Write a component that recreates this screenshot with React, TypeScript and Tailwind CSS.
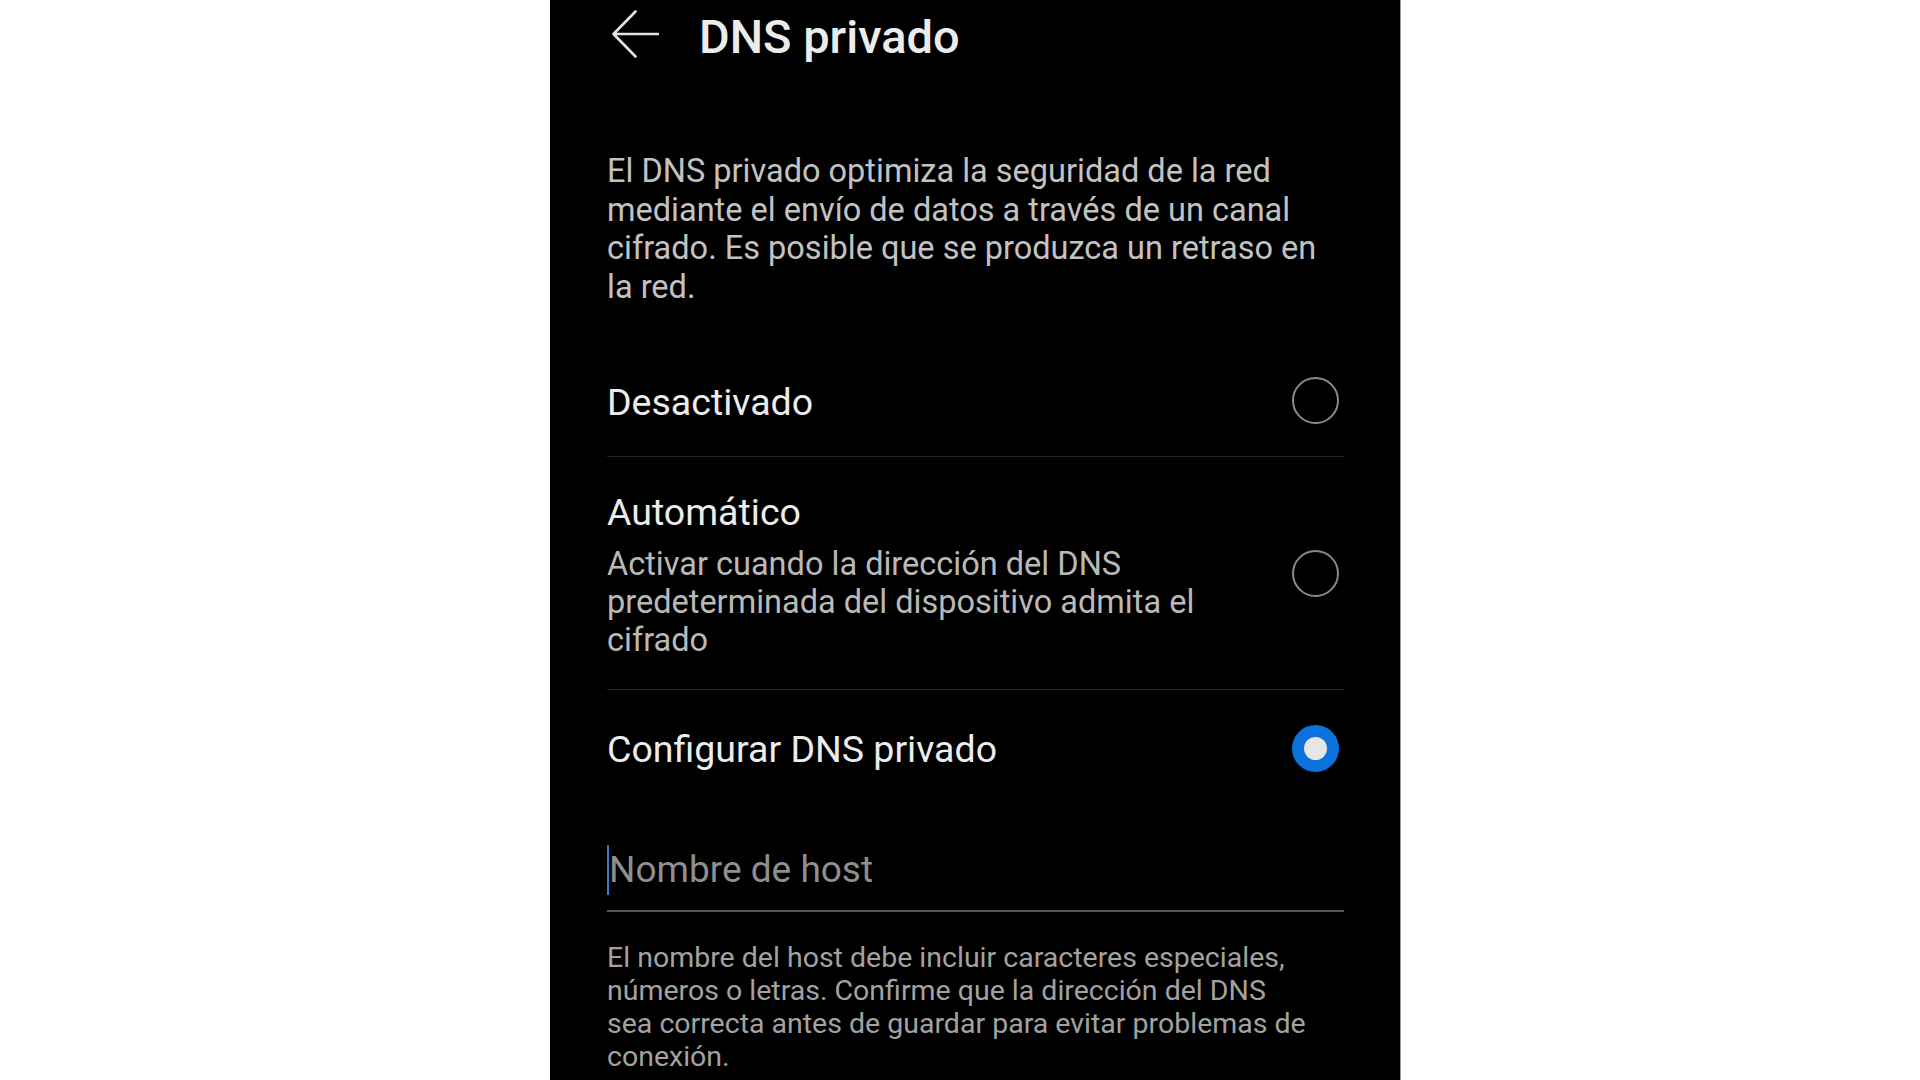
import React from "react";

function Radio({ checked = false, className = "" }: { checked?: boolean; className?: string }) {
  if (checked) {
    return (
      <div
        className={`mr-[5px] flex h-[47px] w-[47px] shrink-0 items-center justify-center rounded-full bg-[#0b72dd] ${className}`}
      >
        <div className="h-[23px] w-[23px] rounded-full bg-[#e6e6e6]" />
      </div>
    );
  }
  return (
    <div
      className={`mr-[5px] h-[47px] w-[47px] shrink-0 rounded-full border-2 border-[#8a8a8a] ${className}`}
    />
  );
}

function BackArrow() {
  return (
    <svg width="48" height="48" viewBox="0 0 48 48" className="ml-[4px] shrink-0">
      <path
        d="M47 24 H2.5 M24.5 1.5 L2.5 24 L24.5 46.5"
        fill="none"
        stroke="#e4e4e4"
        strokeWidth="2.6"
        strokeLinecap="round"
        strokeLinejoin="round"
      />
    </svg>
  );
}

export default function App() {
  return (
    <div className="flex min-h-[1080px] w-full bg-white font-['Roboto',sans-serif]">
      <div className="ml-[550px] flex h-[1080px] w-[851px] flex-col overflow-hidden border-r border-[#9a9a9a] bg-black pl-[57px] pr-[56px]">
        {/* Toolbar */}
        <div className="flex h-[68px] shrink-0 items-center">
          <BackArrow />
          <h1 className="ml-[40px] mt-[5px] text-[47px] font-medium leading-[54px] text-[#ececec]">
            DNS privado
          </h1>
        </div>

        {/* Intro */}
        <p className="mt-[84px] text-[32.5px] leading-[38.5px] text-[#c2c2c2]">
          El DNS privado optimiza la seguridad de la red
          <br />
          mediante el envío de datos a través de un canal
          <br />
          cifrado. Es posible que se produzca un retraso en
          <br />
          la red.
        </p>

        {/* Mode options */}
        <div className="mt-[38px] flex h-[112px] items-center justify-between">
          <span className="mt-[4px] text-[37.5px] leading-[42px] text-[#ececec]">Desactivado</span>
          <Radio />
        </div>
        <div className="h-px bg-[#252525]" />

        <div className="flex items-center justify-between pb-[30px] pt-[34px]">
          <div className="flex flex-col">
            <span className="text-[37.5px] leading-[42px] text-[#ececec]">Automático</span>
            <span className="mt-[12px] text-[32.5px] leading-[38px] text-[#b9b9b9]">
              Activar cuando la dirección del DNS
              <br />
              predeterminada del dispositivo admita el
              <br />
              cifrado
            </span>
          </div>
          <Radio className="mb-[4px]" />
        </div>
        <div className="h-px bg-[#252525]" />

        <div className="flex h-[116px] items-center justify-between">
          <span className="mt-[2px] text-[37.5px] leading-[42px] text-[#ececec]">
            Configurar DNS privado
          </span>
          <Radio checked />
        </div>

        {/* Hostname field */}
        <div className="mt-[39px] flex items-center border-b-2 border-[#575757] pb-[15px]">
          <div className="h-[50px] w-[2px] bg-[#3b7bd0]" />
          <span className="text-[37px] leading-[50px] text-[#8f8f8f]">Nombre de host</span>
        </div>

        <p className="mt-[29px] text-[28.5px] leading-[33px] text-[#a2a2a2]">
          El nombre del host debe incluir caracteres especiales,
          <br />
          números o letras. Confirme que la dirección del DNS
          <br />
          sea correcta antes de guardar para evitar problemas de
          <br />
          conexión.
        </p>
      </div>
    </div>
  );
}
